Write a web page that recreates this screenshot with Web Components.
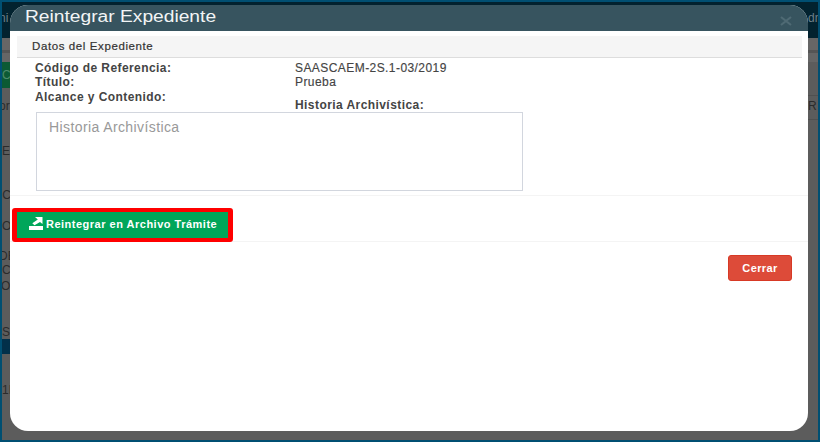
<!DOCTYPE html>
<html lang="es">
<head>
<meta charset="utf-8">
<title>Reintegrar Expediente</title>
<style>
  html, body { margin: 0; padding: 0; }
  body { width: 820px; height: 442px; overflow: hidden; font-family: "Liberation Sans", Arial, sans-serif; }
</style>
</head>
<body>
<app-screen>
  <page-row slot="page" h="32" bg="#02222f" left="ni" right="dn" lpad="-3"></page-row>
  <page-row slot="page" h="4" bg="#02222f"></page-row>
  <page-row slot="page" h="12" bg="#666666"></page-row>
  <page-row slot="page" h="3" bg="#555555"></page-row>
  <page-row slot="page" h="9" bg="#666666"></page-row>
  <page-row slot="page" h="26" bg="#5c5c5c" lbg="#0c5a34" left="C" lcolor="#4d8a6c"></page-row>
  <page-row slot="page" h="7" bg="#5c5c5c"></page-row>
  <page-row slot="page" h="1" bg="#505050" lbg="#5c5c5c"></page-row>
  <page-row slot="page" h="20" bg="#5c5c5c" left="or" right="R" lpad="-3"></page-row>
  <page-row slot="page" h="3" bg="#5c5c5c"></page-row>
  <page-row slot="page" h="1" bg="#505050" lbg="#5c5c5c"></page-row>
  <page-row slot="page" h="62" bg="#5c5c5c" left="E"></page-row>
  <page-row slot="page" h="4" bg="#5c5c5c"></page-row>
  <page-row slot="page" h="18" bg="#5c5c5c" left="IC" lpad="-3"></page-row>
  <page-row slot="page" h="44" bg="#5c5c5c" left="O"></page-row>
  <page-row slot="page" h="16" bg="#5c5c5c" left="DE" lpad="-3"></page-row>
  <page-row slot="page" h="12" bg="#5c5c5c" left="C"></page-row>
  <page-row slot="page" h="20" bg="#5c5c5c" left="OI" lpad="-1"></page-row>
  <page-row slot="page" h="29" bg="#5c5c5c"></page-row>
  <page-row slot="page" h="14" bg="#5c5c5c" left="S"></page-row>
  <page-row slot="page" h="15" bg="#5c5c5c" lbg="#02304a"></page-row>
  <page-row slot="page" h="72" bg="#5c5c5c" left="1P"></page-row>
  <page-row slot="page" h="14" bg="#5c5c5c"></page-row>

  <modal-dialog slot="modal" heading="Reintegrar Expediente">
    <data-panel heading="Datos del Expediente">
      <field-grid></field-grid>
    </data-panel>
    <action-bar slot="actions"></action-bar>
    <close-bar slot="footer"></close-bar>
  </modal-dialog>
</app-screen>

<script>
class AppScreen extends HTMLElement {
  constructor() {
    super();
    this.attachShadow({ mode: "open" }).innerHTML = `
    <style>
      :host {
        display: block;
        position: relative;
        width: 820px;
        height: 442px;
        box-sizing: border-box;
        border: 2px solid #004f72;
        overflow: hidden;
        background: #5c5c5c;
      }
      .page { display: flex; flex-direction: column; }
      .over { position: absolute; left: 8px; top: 3px; }
    </style>
    <div class="page"><slot name="page"></slot></div>
    <div class="over"><slot name="modal"></slot></div>
    `;
  }
}

// a row of the page behind the modal, only its two ends show
class PageRow extends HTMLElement {
  constructor() {
    super();
    this.attachShadow({ mode: "open" });
  }
  connectedCallback() {
    const h = this.getAttribute("h");
    const bg = this.getAttribute("bg");
    const lbg = this.getAttribute("lbg") || bg;
    const lpad = this.getAttribute("lpad") || "0";
    const lcolor = this.getAttribute("lcolor") || "#2b2b2b";
    const dark = bg === "#02222f";
    this.shadowRoot.innerHTML = `
    <style>
      :host {
        display: flex;
        justify-content: space-between;
        height: ${h}px;
        background: ${bg};
        font: 12px "Liberation Sans", Arial, sans-serif;
        color: ${dark ? "#6d7f88" : "#2b2b2b"};
      }
      .l, .r { display: flex; align-items: center; width: 8px; overflow: hidden; white-space: nowrap; }
      .l { background: ${lbg}; color: ${dark ? "#6d7f88" : lcolor}; text-indent: ${lpad}px; }
      .r { justify-content: flex-start; width: 10px; }
    </style>
    <span class="l">${this.getAttribute("left") || ""}</span>
    <span class="r">${this.getAttribute("right") || ""}</span>
    `;
  }
}

class ModalDialog extends HTMLElement {
  constructor() {
    super();
    this.attachShadow({ mode: "open" });
  }
  connectedCallback() {
    this.shadowRoot.innerHTML = `
    <style>
      :host {
        display: flex;
        flex-direction: column;
        width: 798px;
        height: 426px;
        background: #fff;
        border-radius: 18px;
        overflow: hidden;
        font-family: "Liberation Sans", Arial, sans-serif;
      }
      header {
        display: flex;
        align-items: center;
        justify-content: space-between;
        height: 24px;
        flex: none;
        padding: 0 16px 2px 15px;
        background: #37545f;
        color: #f2f5f6;
        font-size: 16px;
      }
      /* the screenshot is stretched sideways */
      .title { display: inline-block; transform: scaleX(1.2); transform-origin: left center; }
      .x { width: 12px; height: 10px; margin-top: 8px; }
      .body { padding: 5px 6px 0 7px; }
    </style>
    <header>
      <span class="title">${this.getAttribute("heading")}</span>
      <svg class="x" viewBox="0 0 12 10"><path d="M1 1l10 8M11 1L1 9" stroke="#4f6a74" stroke-width="2.2" fill="none"/></svg>
    </header>
    <div class="body"><slot></slot></div>
    <slot name="actions"></slot>
    <slot name="footer"></slot>
    `;
  }
}

class DataPanel extends HTMLElement {
  constructor() {
    super();
    this.attachShadow({ mode: "open" });
  }
  connectedCallback() {
    this.shadowRoot.innerHTML = `
    <style>
      :host { display: block; }
      .head {
        height: 21px;
        line-height: 21px;
        padding-left: 15px;
        background: #f5f5f5;
        border-bottom: 1px solid #dddddd;
        font-size: 11.5px;
        letter-spacing: .6px;
        color: #333;
        -webkit-text-stroke: .2px #333;
      }
    </style>
    <div class="head">${this.getAttribute("heading")}</div>
    <slot></slot>
    `;
  }
}

class FieldGrid extends HTMLElement {
  constructor() {
    super();
    this.attachShadow({ mode: "open" }).innerHTML = `
    <style>
      :host {
        display: grid;
        grid-template-columns: 260px 1fr;
        padding: 4px 0 0 18px;
        font-size: 12px;
        letter-spacing: .43px;
        color: #444;
      }
      .label { font-weight: bold; height: 14px; line-height: 12px; color: #444; }
      .value { height: 14px; line-height: 12px; -webkit-text-stroke: .15px #444; }
      .alcance { height: 14px; padding-top: 1px; }
      .hist { padding-top: 9px; height: 12px; line-height: 12px; }
      .area {
        grid-column: 1 / 3;
        box-sizing: border-box;
        width: 487px;
        height: 79px;
        margin: 1px 0 0 1px;
        padding: 6px 12px;
        border: 1px solid #d2d6de;
        font-size: 14px;
        letter-spacing: .4px;
        color: #999;
      }
    </style>
    <span class="label">Código de Referencia:</span><span class="value">SAASCAEM-2S.1-03/2019</span>
    <span class="label">Título:</span><span class="value">Prueba</span>
    <span class="label alcance">Alcance y Contenido:</span><span class="label hist">Historia Archivística:</span>
    <div class="area">Historia Archivística</div>
    `;
  }
}

class ActionBar extends HTMLElement {
  constructor() {
    super();
    this.attachShadow({ mode: "open" }).innerHTML = `
    <style>
      :host {
        display: block;
        margin-top: 4px;
        height: 47px;
        box-sizing: border-box;
        padding: 12px 0 0 2px;
        border-top: 1px solid #f4f4f4;
        border-bottom: 1px solid #f4f4f4;
      }
      .mark {
        display: inline-flex;
        border: solid #ff0000;
        border-width: 4px 5px;
        border-radius: 3px;
      }
      button {
        display: inline-flex;
        align-items: center;
        gap: 3px;
        box-sizing: border-box;
        width: 211px;
        height: 26px;
        padding: 0 0 2px 12px;
        border: 0;
        background: #00a65a;
        color: #fff;
        font: bold 11px "Liberation Sans", Arial, sans-serif;
        letter-spacing: .5px;
      }
      svg { width: 14px; height: 13px; flex: none; margin-top: -1px; }
    </style>
    <div class="mark">
      <button>
        <svg viewBox="0 0 14 13"><path d="M0 9h14v4H0z" fill="#fff"/><path d="M6 0h7.500v7L11 4.900 5.500 8.300 3.300 6.300 8.800 2.500z" fill="#fff"/></svg>
        Reintegrar en Archivo Trámite
      </button>
    </div>
    `;
  }
}

class CloseBar extends HTMLElement {
  constructor() {
    super();
    this.attachShadow({ mode: "open" }).innerHTML = `
    <style>
      :host { display: flex; justify-content: flex-end; padding: 13px 16px 0 0; }
      button {
        width: 64px;
        height: 26px;
        padding: 0;
        border: 1px solid #d73925;
        border-radius: 3px;
        background: #dd4b39;
        color: #fff;
        font: bold 11px "Liberation Sans", Arial, sans-serif;
        letter-spacing: .4px;
      }
    </style>
    <button>Cerrar</button>
    `;
  }
}

customElements.define("app-screen", AppScreen);
customElements.define("page-row", PageRow);
customElements.define("modal-dialog", ModalDialog);
customElements.define("data-panel", DataPanel);
customElements.define("field-grid", FieldGrid);
customElements.define("action-bar", ActionBar);
customElements.define("close-bar", CloseBar);
</script>
</body>
</html>
